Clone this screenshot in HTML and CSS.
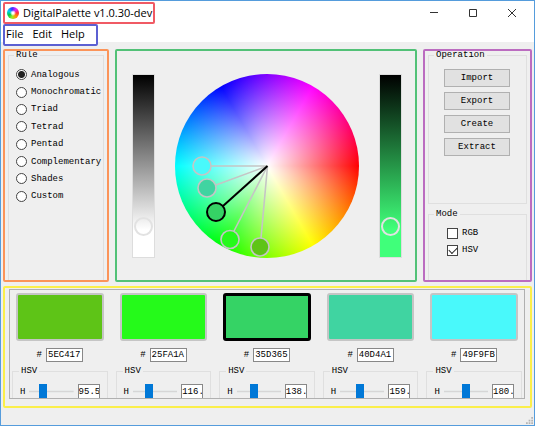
FILE: index.html
```html
<!DOCTYPE html>
<html lang="en">
<head>
<meta charset="utf-8">
<title>DigitalPalette v1.0.30-dev</title>
<link rel="stylesheet" href="styles.css">
</head>
<body>
<div class="window">
  <header class="header">
    <div class="titlebar">
      <div class="title marked red">
        <span class="logo"></span>
        <span>DigitalPalette v1.0.30-dev</span>
      </div>
      <div class="controls">
        <button type="button" aria-label="Minimize"><svg viewBox="0 0 10 10"><path d="M1 4.5H9"/></svg></button>
        <button type="button" aria-label="Maximize"><svg viewBox="0 0 10 10"><path d="M1.5 1.5H8.5V8.5H1.5Z"/></svg></button>
        <button type="button" aria-label="Close"><svg viewBox="0 0 10 10"><path d="M1 1L9 9M9 1L1 9"/></svg></button>
      </div>
    </div>
    <nav class="menu marked blue">
      <a href="#file">File</a>
      <a href="#edit">Edit</a>
      <a href="#help">Help</a>
    </nav>
  </header>

  <main class="main">
    <section class="panel rule marked orange">
      <fieldset class="group open">
        <legend>Rule</legend>
        <div class="rules">
          <label><input type="radio" name="rule" checked>Analogous</label>
          <label><input type="radio" name="rule">Monochromatic</label>
          <label><input type="radio" name="rule">Triad</label>
          <label><input type="radio" name="rule">Tetrad</label>
          <label><input type="radio" name="rule">Pentad</label>
          <label><input type="radio" name="rule">Complementary</label>
          <label><input type="radio" name="rule">Shades</label>
          <label><input type="radio" name="rule">Custom</label>
        </div>
      </fieldset>
    </section>

    <section class="panel stage marked green">
      <div class="bar gray"><span class="knob"></span></div>
      <div class="wheel">
        <svg viewBox="0 0 184 184">
          <g stroke="#c5c5c5" stroke-width="1.6">
            <path d="M92.5 92L36 92M92.5 92L41 111M92.5 92L59 157M92.5 92L86 164" fill="none"/>
            <circle cx="27" cy="92" r="9" fill="#49f9fb"/>
            <circle cx="32" cy="114" r="9" fill="#40d4a1"/>
            <circle cx="55" cy="165.5" r="9" fill="#25fa1a"/>
            <circle cx="85" cy="173" r="9" fill="#5ec417"/>
          </g>
          <g stroke="#000" stroke-width="2">
            <path d="M92.5 92L48 132"/>
            <circle cx="41" cy="138" r="9" fill="#35d365"/>
          </g>
        </svg>
      </div>
      <div class="bar tone"><span class="knob"></span></div>
    </section>

    <section class="panel side marked purple">
      <fieldset class="group operation">
        <legend>Operation</legend>
        <div class="buttons">
          <button type="button">Import</button>
          <button type="button">Export</button>
          <button type="button">Create</button>
          <button type="button">Extract</button>
        </div>
      </fieldset>
      <fieldset class="group open mode">
        <legend>Mode</legend>
        <div class="modes">
          <label><input type="checkbox">RGB</label>
          <label><input type="checkbox" checked>HSV</label>
        </div>
      </fieldset>
    </section>
  </main>

  <section class="palette marked yellow">
    <div class="viewport">
      <article class="card">
        <div class="swatch c1"></div>
        <label class="hex"># <input type="text" value="5EC417"></label>
        <fieldset class="group hsv"><legend>HSV</legend>
          <div class="channel"><label for="h1">H</label><input id="h1" type="range" max="360" value="95"><input class="value" type="text" value="95.5" aria-label="Hue"></div>
        </fieldset>
      </article>
      <article class="card">
        <div class="swatch c2"></div>
        <label class="hex"># <input type="text" value="25FA1A"></label>
        <fieldset class="group hsv"><legend>HSV</legend>
          <div class="channel"><label for="h2">H</label><input id="h2" type="range" max="360" value="116"><input class="value" type="text" value="116.6" aria-label="Hue"></div>
        </fieldset>
      </article>
      <article class="card">
        <div class="swatch c3 active"></div>
        <label class="hex"># <input type="text" value="35D365"></label>
        <fieldset class="group hsv"><legend>HSV</legend>
          <div class="channel"><label for="h3">H</label><input id="h3" type="range" max="360" value="138"><input class="value" type="text" value="138.2" aria-label="Hue"></div>
        </fieldset>
      </article>
      <article class="card">
        <div class="swatch c4"></div>
        <label class="hex"># <input type="text" value="40D4A1"></label>
        <fieldset class="group hsv"><legend>HSV</legend>
          <div class="channel"><label for="h4">H</label><input id="h4" type="range" max="360" value="159"><input class="value" type="text" value="159.3" aria-label="Hue"></div>
        </fieldset>
      </article>
      <article class="card">
        <div class="swatch c5"></div>
        <label class="hex"># <input type="text" value="49F9FB"></label>
        <fieldset class="group hsv"><legend>HSV</legend>
          <div class="channel"><label for="h5">H</label><input id="h5" type="range" max="360" value="180"><input class="value" type="text" value="180.6" aria-label="Hue"></div>
        </fieldset>
      </article>
    </div>
  </section>

  <footer class="status">
    <svg class="grip" viewBox="0 0 8 8" fill="#b4b4b4"><path d="M6 0h2v2H6zM6 3h2v2H6zM6 6h2v2H6zM3 3h2v2H3zM3 6h2v2H3zM0 6h2v2H0z"/></svg>
  </footer>
</div>
</body>
</html>
```
FILE: styles.css
```css
* {
  box-sizing: border-box;
}

body {
  margin: 0;
  font: 9px/12px "Liberation Mono", monospace;
  color: #000;
  background: #efefef;
}

button,
input {
  font: inherit;
  color: inherit;
  margin: 0;
}

.window {
  display: flex;
  flex-direction: column;
  min-height: 100vh;
  border: 1px solid #559cdc;
}

/* Coloured outlines around each region */
.marked {
  position: relative;
}

.marked::after {
  content: "";
  position: absolute;
  inset: 0;
  border: 2px solid var(--mark);
  border-radius: 2px;
  pointer-events: none;
}

.red { --mark: #f05a64; }
.blue { --mark: #5c60d2; }
.orange { --mark: #fb9459; }
.green { --mark: #52c177; }
.purple { --mark: #bb6cc0; }
.yellow { --mark: #fbef4a; }

/* Title bar and menu */
.header {
  height: 41px;
  background: #fff;
  font: 11px/20px "Open Sans", sans-serif;
}

.titlebar {
  display: flex;
  justify-content: space-between;
  padding: 1px 3px 0 2px;
}

.title {
  display: flex;
  align-items: center;
  gap: 4px;
  height: 22px;
  padding: 0 3px 0 4px;
}

.logo {
  width: 12px;
  height: 12px;
  border-radius: 50%;
  background:
    radial-gradient(circle, #fff 0 1px, transparent 3px),
    conic-gradient(from 90deg, #f33, #f90, #9e2, #0c4, #0cf, #33f, #d2f, #f33);
}

.controls {
  display: flex;
}

.controls button {
  width: 39px;
  height: 22px;
  padding: 0;
  border: 0;
  background: none;
}

.controls svg {
  display: block;
  width: 10px;
  height: 10px;
  margin: 0 auto;
  fill: none;
  stroke: #333;
}

.menu {
  display: flex;
  gap: 9px;
  width: 95px;
  height: 22px;
  margin-left: 2px;
  padding-left: 3px;
  background: #fff;
}

.menu a {
  color: inherit;
  text-decoration: none;
}

/* Working area */
.main {
  display: grid;
  grid-template-columns: 106px 1fr 109px;
  gap: 6px;
  padding: 7px 2px 4px;
}

.panel {
  min-height: 233px;
}

.group {
  min-width: 0;
  margin: 0;
  padding: 0;
  border: 1px solid #dfdfdf;
}

.group.open {
  border-bottom: 0;
}

.group legend {
  margin-left: 5px;
  padding: 0 2px;
}

.rule,
.side {
  display: flex;
  flex-direction: column;
  padding: 0 5px 2px;
}

.rule .group,
.mode {
  flex: 1;
}

.rules {
  display: grid;
  grid-auto-rows: 1fr;
  height: 139px;
  margin-top: 5px;
  padding-left: 7px;
}

.rules label,
.modes label {
  display: flex;
  align-items: center;
  gap: 4px;
}

input[type="radio"],
input[type="checkbox"] {
  appearance: none;
  flex: none;
  width: 11px;
  height: 11px;
  border: 1px solid #444;
  background: #fff;
}

input[type="radio"] {
  border-radius: 50%;
}

input[type="radio"]:checked {
  background: radial-gradient(circle, #222 0 3px, #fff 4px);
}

input[type="checkbox"]:checked {
  display: grid;
  place-items: center;
}

input[type="checkbox"]:checked::before {
  content: "";
  width: 7px;
  height: 4px;
  margin-bottom: 2px;
  border: solid #222;
  border-width: 0 0 1px 1px;
  transform: rotate(-45deg);
}

.stage {
  display: flex;
  align-items: flex-start;
  gap: 20px;
  padding: 25px 15px 24px 17px;
}

.wheel {
  flex: 1;
  aspect-ratio: 1;
  border-radius: 50%;
  background:
    radial-gradient(closest-side, #fff, transparent),
    conic-gradient(from 90deg, #f00, #ff0, #0f0, #0ff, #00f, #f0f, #f00);
}

.wheel svg {
  display: block;
  width: 100%;
}

.bar {
  position: relative;
  align-self: stretch;
  width: 23px;
  border: 1px solid #ddd;
}

.bar.gray {
  background: linear-gradient(#000, #fff 85%);
}

.bar.tone {
  background: linear-gradient(#000, #40ff7a 85%);
}

.knob {
  position: absolute;
  top: 78%;
  left: 1px;
  width: 19px;
  height: 19px;
  border: 2px solid #e2e2e2;
  border-radius: 50%;
}

.operation {
  height: 155px;
  margin-bottom: 4px;
}

.buttons {
  display: grid;
  gap: 5px;
  margin-top: 8px;
  padding: 0 16px 0 15px;
}

.buttons button {
  height: 18px;
  padding: 0;
  border: 1px solid #b0b0b0;
  background: #e1e1e1;
}

.modes {
  display: grid;
  gap: 5px;
  margin-top: 7px;
  padding-left: 18px;
}

/* Colour cards */
.palette {
  margin: 0 2px;
  padding: 3px 7px 9px 6px;
}

.viewport {
  display: grid;
  grid-template-columns: repeat(5, 1fr);
  gap: 8px;
  height: 110px;
  padding: 3px 2px 0;
  border: 1px solid #b0b0b0;
  overflow: hidden;
}

.card {
  min-width: 0;
}

.swatch {
  height: 48px;
  margin: 0 4px;
  border: 2px solid #c5c5c5;
  border-radius: 3px;
}

.swatch.active {
  border: 3px solid #000;
}

.c1 { background: #5ec417; }
.c2 { background: #25fa1a; }
.c3 { background: #35d365; }
.c4 { background: #40d4a1; }
.c5 { background: #49f9fb; }

.hex {
  display: flex;
  justify-content: center;
  align-items: center;
  gap: 4px;
  height: 14px;
  margin: 7px 0 3px;
}

.hex input {
  width: 37px;
  height: 14px;
  padding: 0 1px;
  border: 1px solid #888;
  background: #fff;
}

.hsv {
  height: 60px;
}

.hsv legend {
  margin-left: 6px;
}

.channel {
  display: flex;
  align-items: center;
  gap: 4px;
  margin-top: 7px;
  padding: 0 7px;
}

input[type="range"] {
  appearance: none;
  flex: 1;
  min-width: 0;
  height: 15px;
  background: linear-gradient(#d6d6d6, #d6d6d6) center / 100% 1px no-repeat,
    linear-gradient(#e7eaea, #e7eaea) center / 100% 3px no-repeat;
}

input[type="range"]::-webkit-slider-thumb {
  appearance: none;
  width: 8px;
  height: 15px;
  background: #0078d7;
}

.value {
  width: 22px;
  height: 15px;
  padding: 0;
  border: 1px solid #888;
  background: #fff;
}

.status {
  display: flex;
  flex: 1;
  justify-content: flex-end;
  align-items: flex-end;
  padding: 1px;
}

.grip {
  width: 7px;
  height: 7px;
}
```
